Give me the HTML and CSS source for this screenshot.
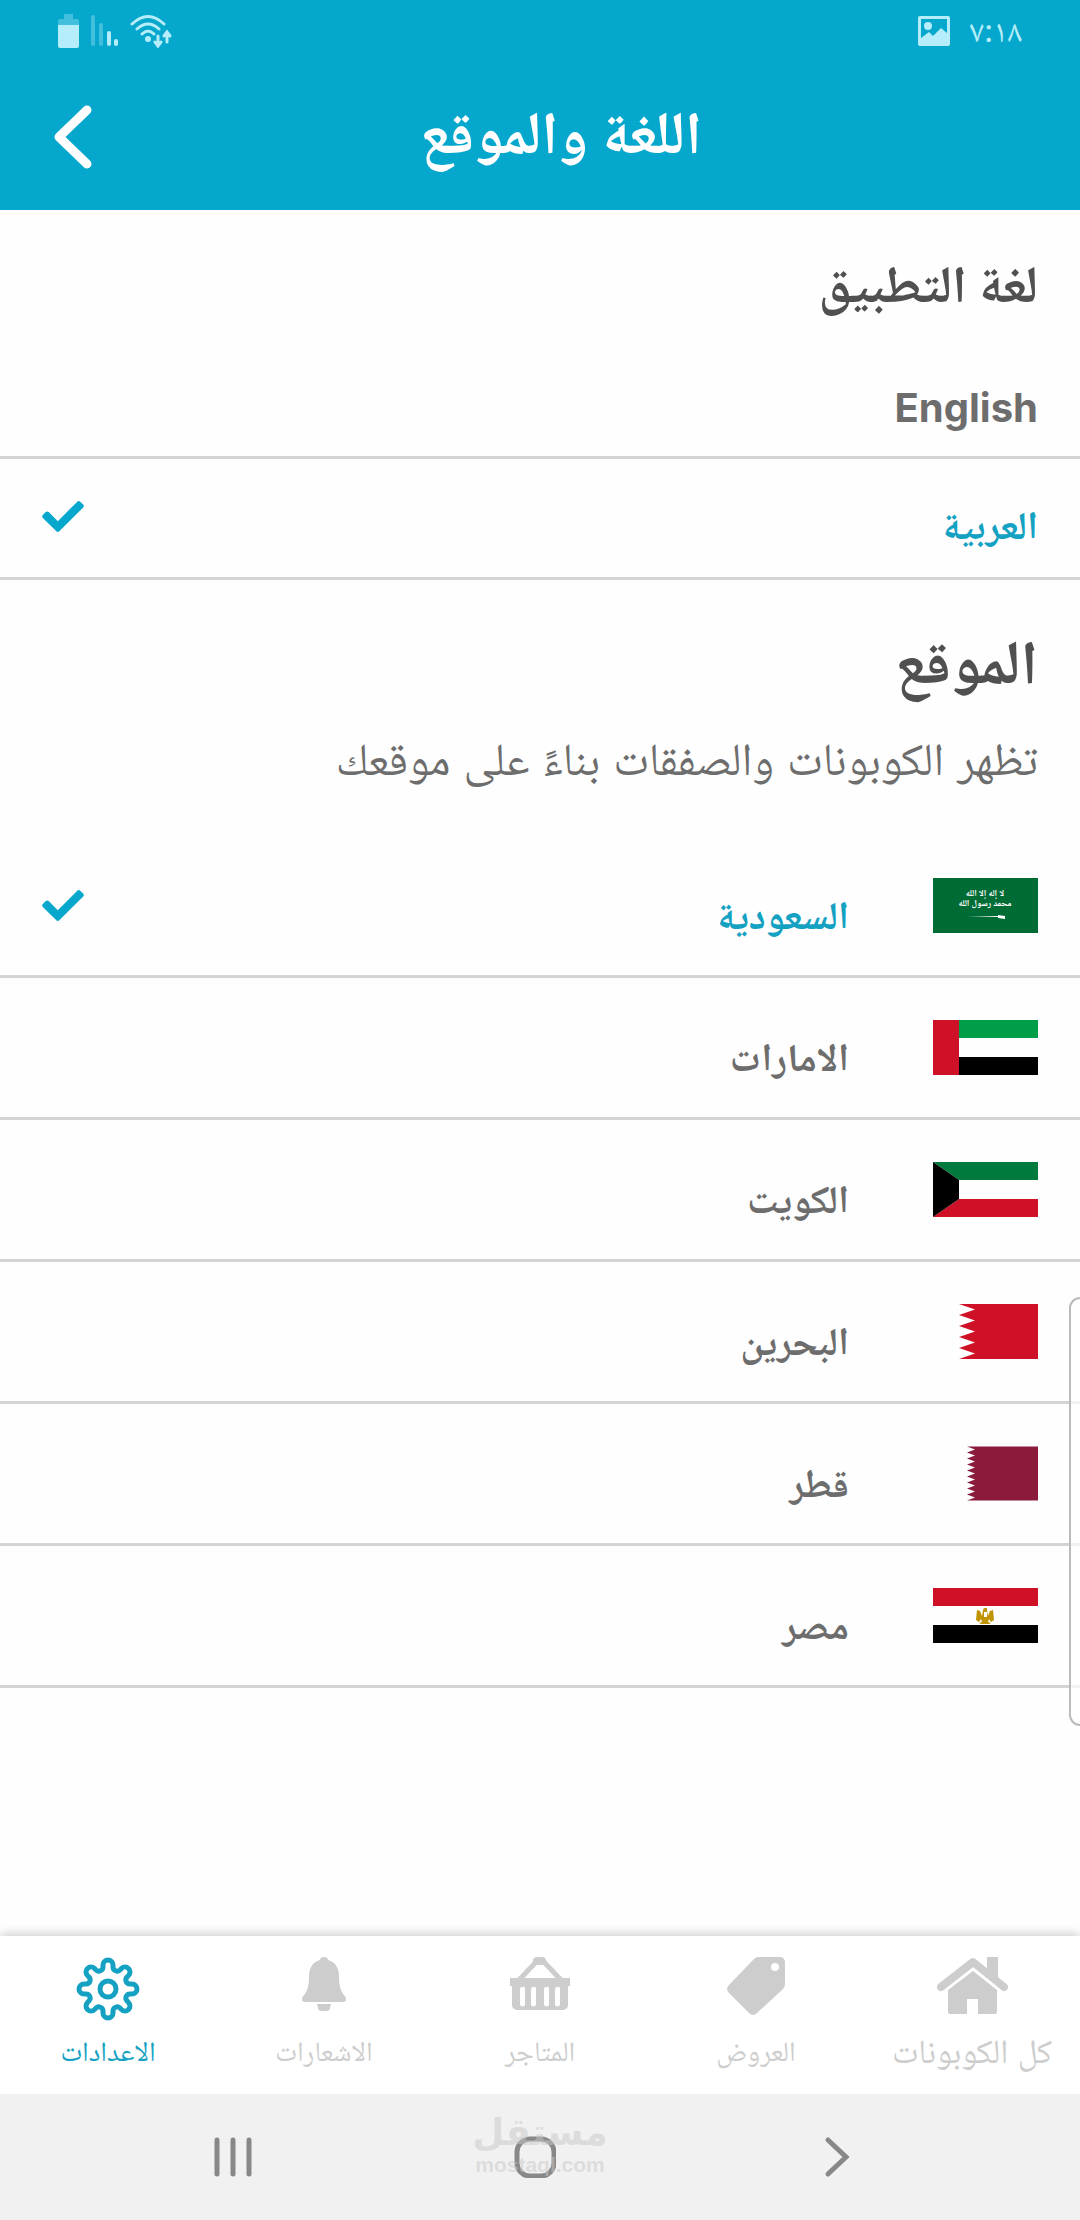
FILE: index.html
```html
<!DOCTYPE html>
<html lang="ar" dir="rtl">

<head>
 <meta charset="UTF-8">
 <meta name="viewport" content="width=device-width, initial-scale=1.0">
 <title>اللغة والموقع</title>
 <link rel="stylesheet" href="styles.css">
</head>

<body>
 <header class="header">
  <div class="status">
   <div class="status-group">
    <span class="time">٧:١٨</span>
    <svg width="32" height="30" viewBox="0 0 32 30">
     <path fill="currentColor" fill-rule="evenodd" d="M2 0h28a2 2 0 0 1 2 2v26a2 2 0 0 1-2 2H2a2 2 0 0 1-2-2V2a2 2 0 0 1 2-2zM3 3v19l8-6 4 4 8-8 6 5V3zM10 6a4 4 0 1 1 0 8 4 4 0 0 1 0-8z" />
    </svg>
   </div>
   <div class="status-group signals">
    <svg width="42" height="34" viewBox="0 0 42 34" fill="none" stroke="currentColor" stroke-width="3" stroke-linecap="round">
     <path d="M2 10Q18-5 34 10M7 15Q18 5 29 15M12 20Q18 14 24 20" />
     <circle cx="18" cy="25" r="3" fill="currentColor" stroke="none" />
     <path d="M28 22v9M25 28l3 4 3-4M37 28v-9M34 22l3-4 3 4" />
    </svg>
    <svg width="27" height="32" viewBox="0 0 27 32" fill="currentColor">
     <rect class="faint" width="4" height="31" rx="2" />
     <rect class="faint" x="8" y="8" width="4" height="23" rx="2" />
     <rect x="16" y="16" width="4" height="15" rx="2" />
     <rect x="23" y="24" width="4" height="7" rx="2" />
    </svg>
    <svg width="21" height="34" viewBox="0 0 21 34" fill="currentColor">
     <path class="faint" d="M6 0h9v5h4a2 2 0 0 1 2 2v4H0V7a2 2 0 0 1 2-2h4z" />
     <path d="M0 11h21v21a2 2 0 0 1-2 2H2a2 2 0 0 1-2-2z" />
    </svg>
   </div>
  </div>
  <div class="title-bar">
   <h1>اللغة والموقع</h1>
   <button class="back" aria-label="رجوع">
    <svg width="38" height="66" viewBox="0 0 38 66" fill="none" stroke="currentColor" stroke-width="9" stroke-linecap="round" stroke-linejoin="round">
     <path d="M33 6L5 33l28 27" />
    </svg>
   </button>
  </div>
 </header>

 <main>
  <section>
   <h2>لغة التطبيق</h2>
   <label class="row language">
    <input type="radio" name="language">
    <span class="name" lang="en">English</span>
    <svg class="check"><use href="#check" /></svg>
   </label>
   <label class="row language">
    <input type="radio" name="language" checked>
    <span class="name">العربية</span>
    <svg class="check"><use href="#check" /></svg>
   </label>
  </section>

  <section>
   <h2 class="big">الموقع</h2>
   <p class="hint">تظهر الكوبونات والصفقات بناءً على موقعك</p>

   <label class="row">
    <input type="radio" name="country" checked>
    <svg class="flag" viewBox="0 0 105 55">
     <path fill="#006c35" d="M0 0h105v55H0z" />
     <text class="shahada" x="52" y="18">لا إله إلا الله</text>
     <text class="shahada" x="52" y="28">محمد رسول الله</text>
     <path fill="#fff" d="M34 39l31-1v-1l7 1v3l-7-1v-1z" />
    </svg>
    <span class="name">السعودية</span>
    <svg class="check"><use href="#check" /></svg>
   </label>
   <label class="row">
    <input type="radio" name="country">
    <svg class="flag" viewBox="0 0 105 55">
     <path fill="#009e49" d="M26 0h79v18H26z" />
     <path d="M26 37h79v18H26z" />
     <path fill="#ce1126" d="M0 0h26v55H0z" />
    </svg>
    <span class="name">الامارات</span>
    <svg class="check"><use href="#check" /></svg>
   </label>
   <label class="row">
    <input type="radio" name="country">
    <svg class="flag" viewBox="0 0 105 55">
     <path fill="#007a3d" d="M0 0h105v18H26z" />
     <path fill="#ce1126" d="M26 37h79v18H0z" />
     <path d="M0 0l26 18v19L0 55z" />
    </svg>
    <span class="name">الكويت</span>
    <svg class="check"><use href="#check" /></svg>
   </label>
   <label class="row">
    <input type="radio" name="country">
    <svg class="flag" viewBox="0 0 105 55">
     <path fill="#ce1126" d="M105 0H26l16 5.500-16 5.500 16 5.500-16 5.500 16 5.500-16 5.500 16 5.500-16 5.500 16 5.500-16 5.500h79z" />
    </svg>
    <span class="name">البحرين</span>
    <svg class="check"><use href="#check" /></svg>
   </label>
   <label class="row">
    <input type="radio" name="country">
    <svg class="flag" viewBox="0 0 105 54">
     <path fill="#8a1b3b" d="M105 0H34l8 3-8 3 8 3-8 3 8 3-8 3 8 3-8 3 8 3-8 3 8 3-8 3 8 3-8 3 8 3-8 3 8 3-8 3h71z" />
    </svg>
    <span class="name">قطر</span>
    <svg class="check"><use href="#check" /></svg>
   </label>
   <label class="row">
    <input type="radio" name="country">
    <svg class="flag" viewBox="0 0 105 55">
     <path fill="#ce1126" d="M0 0h105v18H0z" />
     <path d="M0 37h105v18H0z" />
     <path fill="#c09300" d="M44 22l3 1 2 5 1-6 1-2h3l0 2 1 6 2-5 3-1 1 10-3 2-2-3-1 3 3 1-2 1h-8l-2-1 3-1-1-3-2 3-3-2z" />
     <path fill="#fff" d="M47 25l2 6M51 24h3v5h-3zM57 31l1-6" />
    </svg>
    <span class="name">مصر</span>
    <svg class="check"><use href="#check" /></svg>
   </label>
  </section>
 </main>

 <nav class="tabs">
  <a class="tab large" href="#coupons">
   <svg width="71" height="64" viewBox="0 0 71 64" fill="currentColor">
    <path fill="none" stroke="currentColor" stroke-width="8" stroke-linecap="round" stroke-linejoin="round" d="M4 30L36 5l31 25" />
    <path d="M50 0h11v25L50 16zM36 14l24 19v22a2 2 0 0 1-2 2H41V42H30v15H13a2 2 0 0 1-2-2V33z" />
   </svg>
   كل الكوبونات
  </a>
  <a class="tab" href="#offers">
   <svg width="58" height="64" viewBox="0 0 58 64" fill="currentColor">
    <path fill-rule="evenodd" d="M31 0h22a5 5 0 0 1 5 5v22q0 3-2 5L30 56q-4 4-8 0L2 36q-4-4 0-8L27 2q2-2 4-2zM48 6a4 4 0 1 0 0 8 4 4 0 0 0 0-8z" />
   </svg>
   العروض
  </a>
  <a class="tab" href="#stores">
   <svg width="60" height="64" viewBox="0 0 60 64" fill="currentColor">
    <path fill="none" stroke="currentColor" stroke-width="5" d="M9 23L27 4h6l18 19" />
    <rect x="23" width="13" height="8" rx="4" />
    <path fill-rule="evenodd" d="M0 21h60v8h-2v19a5 5 0 0 1-5 5H7a5 5 0 0 1-5-5V29H0zM12 30a2 2 0 0 0-2 2v15a2 2 0 0 0 5 0V32a2 2 0 0 0-3-2zM23 30a2 2 0 0 0-2 2v15a2 2 0 0 0 5 0V32a2 2 0 0 0-3-2zM36 30a2 2 0 0 0-2 2v15a2 2 0 0 0 5 0V32a2 2 0 0 0-3-2zM47 30a2 2 0 0 0-2 2v15a2 2 0 0 0 5 0V32a2 2 0 0 0-3-2z" />
   </svg>
   المتاجر
  </a>
  <a class="tab" href="#alerts">
   <svg width="44" height="64" viewBox="0 0 44 64" fill="currentColor">
    <path d="M18 3q0-3 4-3t4 3q11 3 11 17 0 13 5 18 2 2 2 4 0 3-3 3H3q-3 0-3-3 0-2 2-4 5-5 5-18Q7 6 18 3zM15 47h14l-1 4q0 3-4 3h-4q-4 0-4-3z" />
   </svg>
   الاشعارات
  </a>
  <a class="tab active" href="#settings">
   <svg width="64" height="64" viewBox="-32 -32 64 64" fill="none" stroke="currentColor" stroke-width="5">
    <circle r="8" />
    <path d="M-5-22V-24A5 5 0 0 1 5-24V-22A4.110 4.110 0 0 0 12.020-19.090L13.430-20.510A5 5 0 0 1 20.510-13.430L19.090-12.020A4.110 4.110 0 0 0 22-5H24A5 5 0 0 1 24 5H22A4.110 4.110 0 0 0 19.090 12.020L20.510 13.430A5 5 0 0 1 13.430 20.510L12.020 19.090A4.110 4.110 0 0 0 5 22V24A5 5 0 0 1-5 24V22A4.110 4.110 0 0 0-12.020 19.090L-13.430 20.510A5 5 0 0 1-20.510 13.430L-19.090 12.020A4.110 4.110 0 0 0-22 5H-24A5 5 0 0 1-24-5H-22A4.110 4.110 0 0 0-19.090-12.020L-20.510-13.430A5 5 0 0 1-13.430-20.510L-12.020-19.090A4.110 4.110 0 0 0-5-22Z" />
   </svg>
   الاعدادات
  </a>
 </nav>

 <footer class="system" dir="ltr">
  <button aria-label="recents">
   <svg width="38" height="42" viewBox="0 0 38 42"><path d="M3 4v34M19 4v34M35 4v34" /></svg>
  </button>
  <button aria-label="home">
   <svg width="42" height="42" viewBox="0 0 42 42"><rect x="3" y="3" width="37" height="37" rx="13" /></svg>
  </button>
  <button aria-label="back">
   <svg width="26" height="42" viewBox="0 0 26 42"><path d="M4 4l18 17L4 38" /></svg>
  </button>
  <div class="watermark"><b>مستقل</b><span>mostaql.com</span></div>
 </footer>

 <!-- edge panel handle -->
 <div class="edge"></div>

 <svg width="0" height="0" class="defs">
  <symbol id="check" viewBox="0 65 512 382">
   <path d="M174 439L7 273c-10-10-10-26 0-36l37-36c10-10 26-10 36 0l112 112L432 73c10-10 26-10 36 0l37 36c10 10 10 26 0 36L210 439c-10 10-26 10-36 0z" />
  </symbol>
 </svg>
</body>

</html>
```
FILE: styles.css
```css
* {
 box-sizing: border-box;
}

body {
 margin: 0;
 min-height: 100vh;
 display: flex;
 flex-direction: column;
 background: #fefefe;
 color: #6d6d6d;
 font-family: Inter, "Noto Naskh Arabic", "Noto Sans Arabic", "Noto Sans", sans-serif;
}

button {
 padding: 0;
 border: 0;
 background: none;
 color: inherit;
}

svg {
 display: block;
}

.defs {
 position: absolute;
}

/* header */
.header {
 background: #06a7cc;
 color: #fff;
}

.status {
 display: flex;
 justify-content: space-between;
 padding: 14px 58px 16px;
 color: #b5eefa;
}

.status-group {
 display: flex;
 align-items: center;
 height: 34px;
 gap: 20px;
}

.signals {
 gap: 12px;
}

.faint {
 opacity: .35;
}

.time {
 font-size: 32px;
 line-height: 34px;
}

.title-bar {
 display: flex;
 align-items: center;
 padding: 0 64px 0 40px;
 height: 146px;
}

.title-bar h1 {
 flex: 1;
 margin: 0;
 padding-bottom: 10px;
 text-align: center;
 font-size: 60px;
 line-height: 72px;
}

.back {
 padding: 0 14px;
}

/* lists */
h2 {
 margin: 0;
 padding: 44px 42px 24px;
 color: #505050;
 font-size: 52px;
 line-height: 60px;
}

h2.big {
 padding: 42px 42px 6px;
 font-size: 62px;
 line-height: 80px;
}

.hint {
 margin: 0;
 padding: 20px 42px 48px;
 font-size: 46px;
 line-height: 60px;
}

.row {
 position: relative;
 display: flex;
 align-items: center;
 padding: 42px;
 border-bottom: 3px solid #d4d4d4;
}

.row input {
 position: absolute;
 inset: 0;
 width: 100%;
 height: 100%;
 margin: 0;
 opacity: 0;
}

.language {
 padding: 30px 42px 34px;
}

.name {
 flex: 1;
 padding-top: 18px;
 font-size: 39px;
 font-weight: bold;
 line-height: 36px;
}

.name[lang="en"] {
 padding-top: 26px;
 font-size: 40px;
 line-height: 28px;
}

.flag {
 width: 105px;
 height: 55px;
 margin-left: 84px;
}

.shahada {
 fill: #fff;
 font-size: 9px;
 font-weight: bold;
 text-anchor: middle;
}

.check {
 width: 42px;
 height: 31px;
 fill: #06a7cc;
 visibility: hidden;
}

.row input:checked ~ .name {
 color: #15a2c2;
}

.row input:checked ~ .check {
 visibility: visible;
}

/* bottom tabs */
.tabs {
 display: flex;
 margin-top: auto;
 padding-bottom: 23px;
 background: #fff;
 box-shadow: 0 -2px 10px rgba(0, 0, 0, .2);
}

.tab {
 flex: 1;
 display: flex;
 flex-direction: column;
 align-items: center;
 gap: 10px;
 padding-top: 21px;
 color: #cdcdcd;
 font-size: 28px;
 line-height: 40px;
 text-decoration: none;
 white-space: nowrap;
}

.tab.large {
 font-size: 34px;
}

.tab.active {
 color: #15a2c2;
}

/* system bar */
.system {
 position: relative;
 display: flex;
 height: 126px;
 padding: 0 92px 0 82px;
 background: #f1f1f1;
}

.system button {
 flex: 1;
 display: flex;
 align-items: center;
 justify-content: center;
}

.system svg {
 fill: none;
 stroke: #888;
 stroke-width: 5;
 stroke-linecap: round;
}

.watermark {
 position: absolute;
 top: 18px;
 left: 50%;
 transform: translateX(-50%);
 display: flex;
 flex-direction: column;
 align-items: center;
 color: rgba(200, 200, 200, .5);
 pointer-events: none;
}

.watermark b {
 font: bold 37px/42px "DejaVu Sans", sans-serif;
}

.watermark span {
 font: bold 21px/22px "Liberation Sans", sans-serif;
}

.edge {
 position: absolute;
 top: 1297px;
 right: 0;
 width: 11px;
 height: 429px;
 border: 2px solid #bbb;
 border-right: 0;
 border-radius: 20px 0 0 20px;
 background: rgba(255, 255, 255, .7);
}
```
